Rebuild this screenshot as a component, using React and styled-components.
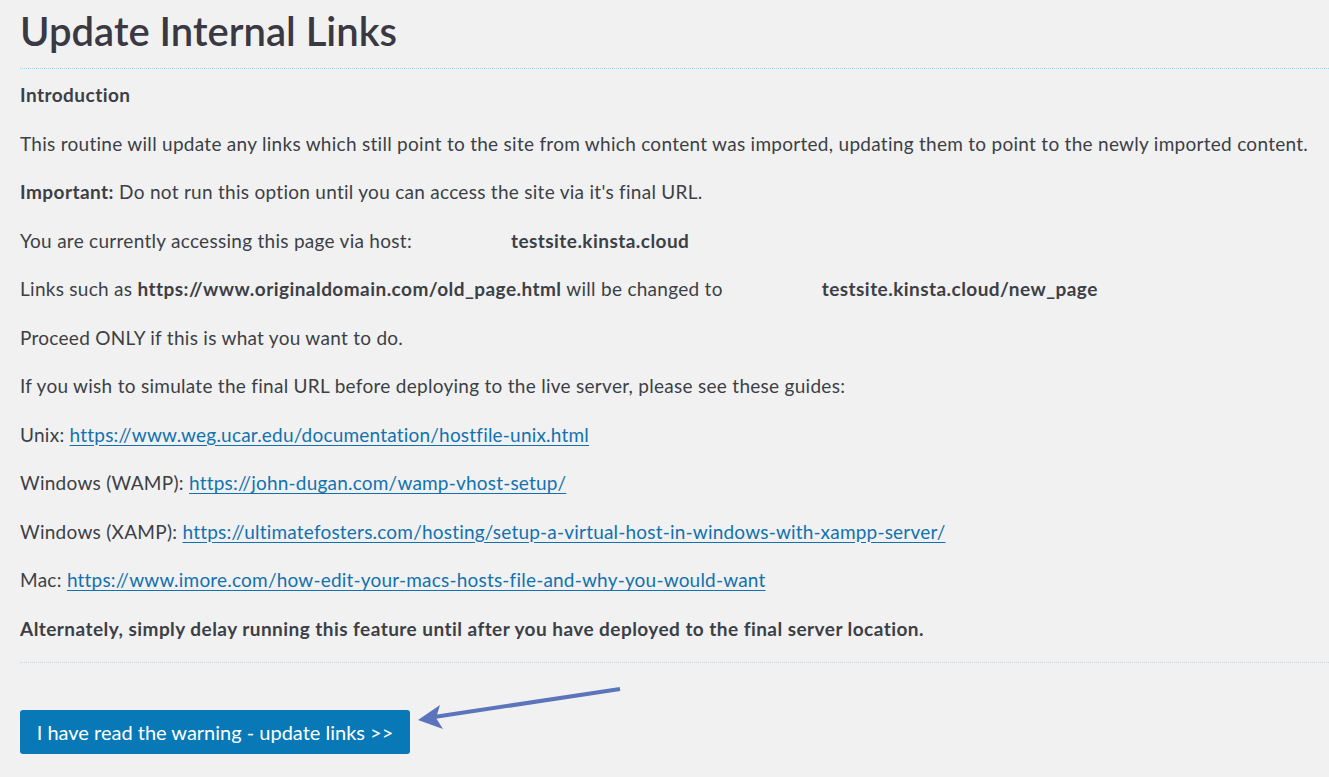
import React from "react";
import styled, { createGlobalStyle } from "styled-components";

const Global = createGlobalStyle`
  html, body { margin: 0; padding: 0; background: #f1f1f1; }
  body { font-family: Lato, "Noto Sans", sans-serif; color: #3c3f46; }
`;

const Page = styled.div`
  position: relative;
  width: 1329px;
  height: 777px;
  overflow: hidden;
  padding-left: 20px;
  box-sizing: border-box;
`;

const Title = styled.h1`
  margin: 0;
  padding: 8px 0 14px;
  font-size: 40px;
  line-height: 46px;
  font-weight: 600;
  color: #3a3843;
  border-bottom: 1px dotted #9fd6ee;
`;

const Body = styled.div`
  display: flex;
  flex-direction: column;
  gap: 20.5px;
  padding-top: 12px;
  padding-bottom: 19px;
  border-bottom: 1px dotted #c9d6de;
`;

const P = styled.p`
  margin: 0;
  font-size: 19px;
  line-height: 28px;
  letter-spacing: ${(p) => (p.$bold ? "0.45px" : "0.28px")};
  white-space: nowrap;
  font-weight: ${(p) => (p.$bold ? 700 : 400)};
`;

const B = styled.strong`
  font-weight: 700;
  letter-spacing: 0.45px;
  margin-left: ${(p) => p.$gap || 0}px;
`;

const A = styled.a`
  color: #1271b0;
  text-decoration: underline;
  text-underline-offset: 3px;
  letter-spacing: 0.2px;
`;

const Footer = styled.div`
  padding-top: 47px;
`;

const Button = styled.button`
  width: 390px;
  height: 44px;
  border: none;
  border-radius: 3px;
  background: #0879b6;
  color: #ffffff;
  font-family: Lato, "Noto Sans", sans-serif;
  font-size: 20px;
  padding: 0;
  cursor: pointer;
`;

const Arrow = styled.svg`
  position: absolute;
  left: 410px;
  top: 680px;
  width: 220px;
  height: 60px;
`;

export default function App() {
  return (
    <>
      <Global />
      <Page>
        <Title>Update Internal Links</Title>
        <Body>
          <P $bold>Introduction</P>
          <P>
            This routine will update any links which still point to the site from which content was imported, updating them to point to the newly imported content.
          </P>
          <P>
            <B>Important:</B> Do not run this option until you can access the site via it's final URL.
          </P>
          <P>
            You are currently accessing this page via host:<B $gap={99}>testsite.kinsta.cloud</B>
          </P>
          <P>
            Links such as <B>https://www.originaldomain.com/old_page.html</B> will be changed to
            <B $gap={99}>testsite.kinsta.cloud/new_page</B>
          </P>
          <P>Proceed ONLY if this is what you want to do.</P>
          <P>If you wish to simulate the final URL before deploying to the live server, please see these guides:</P>
          <P>
            Unix: <A href="#">https://www.weg.ucar.edu/documentation/hostfile-unix.html</A>
          </P>
          <P>
            Windows (WAMP): <A href="#">https://john-dugan.com/wamp-vhost-setup/</A>
          </P>
          <P>
            Windows (XAMP): <A href="#">https://ultimatefosters.com/hosting/setup-a-virtual-host-in-windows-with-xampp-server/</A>
          </P>
          <P>
            Mac: <A href="#">https://www.imore.com/how-edit-your-macs-hosts-file-and-why-you-would-want</A>
          </P>
          <P $bold>Alternately, simply delay running this feature until after you have deployed to the final server location.</P>
        </Body>
        <Footer>
          <Button>I have read the warning - update links &gt;&gt;</Button>
        </Footer>
        <Arrow viewBox="410 680 220 60">
          <line x1="620" y1="689" x2="434" y2="717" stroke="#5b74bb" strokeWidth="4" />
          <polygon points="418,720 440,705 436,718 443,729" fill="#5b74bb" />
        </Arrow>
      </Page>
    </>
  );
}
